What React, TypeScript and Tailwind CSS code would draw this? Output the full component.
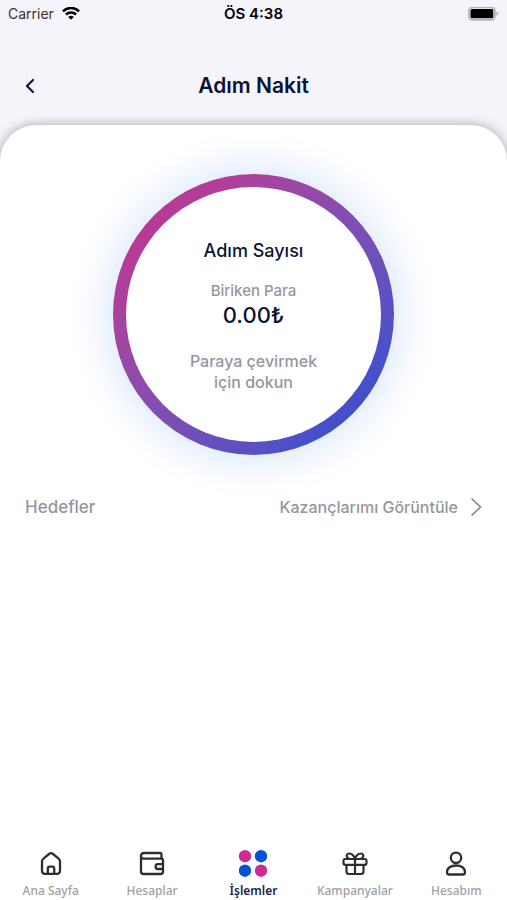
import React from "react";

type NavItem = {
  label: string;
  icon: React.ReactNode;
  active?: boolean;
};

const HomeIcon = () => (
  <svg viewBox="0 0 28 28" className="size-7" fill="none" stroke="#2b2e33" strokeWidth="2.300" strokeLinejoin="round">
    <path d="M5 11.500c0-1.400.6-2.300 1.700-3.200L12 4c1.200-1 2.800-1 4 0l5.300 4.300c1.100.9 1.700 1.800 1.700 3.200V20.800c0 1.700-1.300 3-3 3H8c-1.700 0-3-1.300-3-3z" />
    <path d="M10.800 23.800v-5.300c0-1.100.7-1.800 1.800-1.800h2.800c1.100 0 1.800.7 1.800 1.800v5.300" />
  </svg>
);

const WalletIcon = () => (
  <svg viewBox="0 0 28 28" className="size-7" fill="none" stroke="#2b2e33" strokeWidth="2.300" strokeLinecap="round" strokeLinejoin="round">
    <path d="M23.500 8.700H5.500a2.600 2.600 0 0 1-2.500-2.800A2.800 2.800 0 0 1 5.800 3H22c1 0 1.500.6 1.500 1.500v4.200" />
    <path d="M3 6V21.500C3 23 4 24 5.500 24h17c1.500 0 2.500-1 2.500-2.500V10.200c0-1-.5-1.500-1.500-1.500" />
    <path d="M25 14.200h-5.300a2 2 0 0 0-2 2v.800a2 2 0 0 0 2 2H25" />
  </svg>
);

const DotsIcon = () => (
  <svg viewBox="0 0 28 28" className="size-7">
    <circle cx="6" cy="6.200" r="6.200" fill="#cb2d91" />
    <circle cx="22" cy="6.200" r="6.200" fill="#0752d0" />
    <circle cx="6" cy="20.700" r="6.200" fill="#0752d0" />
    <circle cx="22" cy="20.700" r="6.200" fill="#cb2d91" />
  </svg>
);

const GiftIcon = () => (
  <svg viewBox="0 0 28 28" className="size-7" fill="none" stroke="#2b2e33" strokeWidth="2.200" strokeLinejoin="round">
    <rect x="2.500" y="9" width="23" height="5.800" rx="1.800" />
    <path d="M5.500 14.800V21.500c0 1.500 1 2.500 2.500 2.500h12c1.500 0 2.500-1 2.500-2.500v-6.700M14 9v15" />
    <path d="M14 9c-1-3.200-3.200-5.500-6-5.500C6.100 3.500 5 5.500 6.100 7c.8 1.200 2 2 3.500 2M14 9c1-3.200 3.200-5.500 6-5.500 1.900 0 3 2 1.900 3.500-.8 1.200-2 2-3.500 2" />
  </svg>
);

const UserIcon = () => (
  <svg viewBox="0 0 28 28" className="size-7" fill="none" stroke="#2b2e33" strokeWidth="2.300" strokeLinejoin="round">
    <circle cx="14" cy="7.800" r="5.200" />
    <path d="M5 22.300c0-4.500 3.800-6.800 9-6.800s9 2.300 9 6.800c0 1.400-.8 2.200-2 2.200H7c-1.200 0-2-.8-2-2.200z" />
  </svg>
);

const WifiIcon = () => (
  <svg viewBox="0 0 18 14" className="h-3.5 w-[18px]" fill="none" stroke="#000" strokeWidth="2.500">
    <path d="M.9 4.300a11.500 11.500 0 0 1 16.200 0" />
    <path d="M3.900 7.500a7.300 7.300 0 0 1 10.200 0" />
    <path d="M9 12.800 6.200 10a4 4 0 0 1 5.600 0z" fill="#000" stroke="none" />
  </svg>
);

const BatteryIcon = () => (
  <svg viewBox="0 0 31 14" className="h-3.5 w-[31px]">
    <rect x=".9" y=".4" width="26" height="12.400" rx="3.600" fill="#f4f4fa" stroke="#b4b4b8" strokeWidth="1.800" />
    <rect x="2.500" y="2" width="22.800" height="9.200" rx="1.500" fill="#000" />
    <path d="M28.400 4.400c1.400.5 1.900 1.200 1.900 2.200s-.5 1.700-1.900 2.200z" fill="#b4b4b8" />
  </svg>
);

const navItems: NavItem[] = [
  { label: "Ana Sayfa", icon: <HomeIcon /> },
  { label: "Hesaplar", icon: <WalletIcon /> },
  { label: "İşlemler", icon: <DotsIcon />, active: true },
  { label: "Kampanyalar", icon: <GiftIcon /> },
  { label: "Hesabım", icon: <UserIcon /> },
];

const StatusBar = () => (
  <div className="grid h-7 grid-cols-3 items-center px-2 text-sm text-black">
    <div className="flex items-center gap-2 text-[#333336]">
      <span>Carrier</span>
      <WifiIcon />
    </div>
    <p className="text-center text-[15px] font-semibold">ÖS 4:38</p>
    <div className="flex justify-end">
      <BatteryIcon />
    </div>
  </div>
);

const Header = () => (
  <header className="grid grid-cols-[36px_1fr_36px] items-center px-3 pt-10 pb-[21px]">
    <button type="button" aria-label="Geri" className="flex size-9 items-center justify-center">
      <svg viewBox="0 0 10 16" className="h-4 w-2.5" fill="none" stroke="#0b1238" strokeWidth="2.200" strokeLinecap="round" strokeLinejoin="round">
        <path d="M8 2 2 8l6 6" />
      </svg>
    </button>
    <h1 className="text-center text-[21px] leading-7 font-semibold text-[#0b1238]">
      Adım Nakit
    </h1>
  </header>
);

const StepCounter = () => (
  <button
    type="button"
    className="size-[281px] rounded-full bg-linear-135 from-[#c03391] from-10% to-[#334fd0] to-90% p-[13px] shadow-[0_0_44px_4px_#d3e3fa]"
  >
    <span className="flex size-full flex-col items-center rounded-full bg-white pt-[52px] text-[15px] leading-5 font-medium text-[#94979e]">
      <span className="mb-[18px] text-lg leading-6 text-[#0b1533]">
        Adım Sayısı
      </span>
      <span>Biriken Para</span>
      <span className="mb-[22px] text-[22px] leading-7 text-[#0b1533]">
        0.00₺
      </span>
      <span className="text-base leading-[21px]">
        Paraya çevirmek
        <br />
        için dokun
      </span>
    </span>
  </button>
);

const BottomNav = () => (
  <nav className="grid grid-cols-5 font-['Noto_Sans',sans-serif]">
    {navItems.map(({ label, icon, active }) => (
      <a
        key={label}
        href="#"
        aria-current={active ? "page" : undefined}
        className={`flex flex-col items-center gap-1 text-xs leading-[18px] ${
          active ? "font-semibold text-[#20263f]" : "font-medium text-[#a0a0a3]"
        }`}
      >
        {icon}
        {label}
      </a>
    ))}
  </nav>
);

export default function App() {
  return (
    <div className="flex min-h-screen flex-col bg-[#f4f4fa] font-['Inter',sans-serif]">
      <StatusBar />
      <Header />
      <main className="flex flex-1 flex-col rounded-t-[36px] bg-white shadow-[0_0_12px_#00000055]">
        <div className="flex justify-center pt-[49px]">
          <StepCounter />
        </div>
        <div className="mt-10 flex items-center justify-between px-[25px] font-medium text-[#94979e]">
          <h2 className="text-[17px] leading-6">Hedefler</h2>
          <a href="#" className="flex items-center gap-3 text-base leading-6">
            Kazançlarımı Görüntüle
            <svg viewBox="0 0 12 20" className="h-5 w-3" fill="none" stroke="#85888f" strokeWidth="1.700">
              <path d="m1.500 1.500 9 8.500-9 8.500" />
            </svg>
          </a>
        </div>
        <div className="mt-auto">
          <BottomNav />
        </div>
      </main>
    </div>
  );
}
